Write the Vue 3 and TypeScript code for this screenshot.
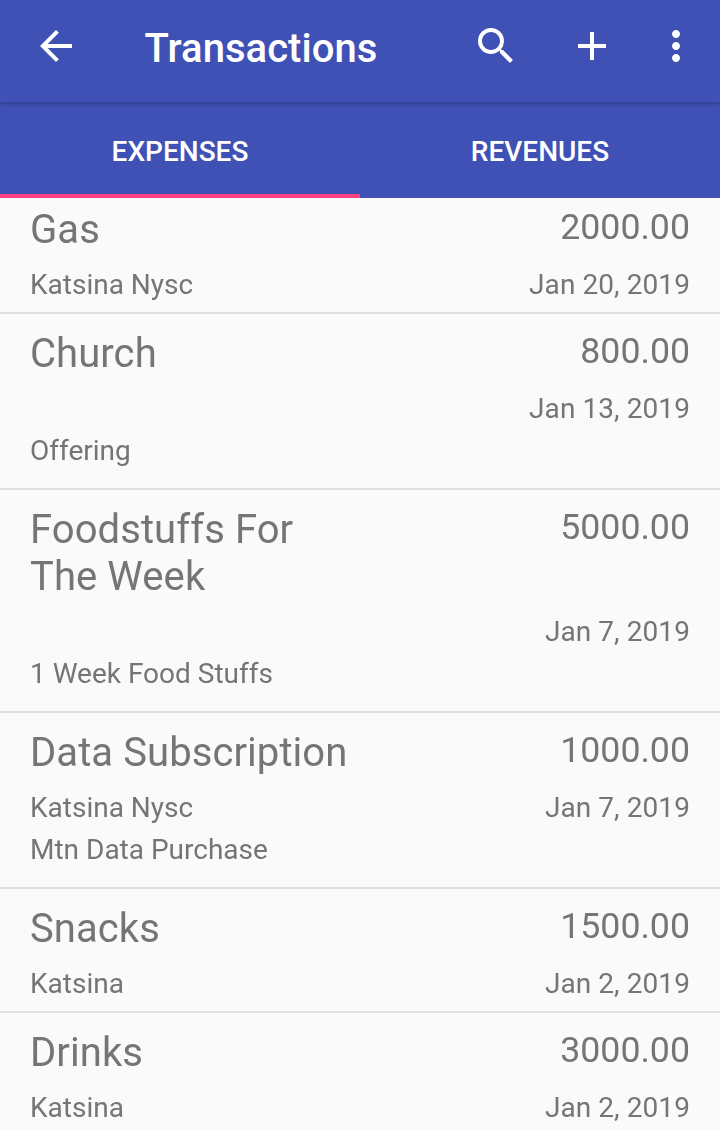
<script setup lang="ts">
interface Txn {
  title: string[];
  amount: string;
  place: string;
  date: string;
  note?: string;
}
const txns: Txn[] = [
  { title: ['Gas'], amount: '2000.00', place: 'Katsina Nysc', date: 'Jan 20, 2019' },
  { title: ['Church'], amount: '800.00', place: '', date: 'Jan 13, 2019', note: 'Offering' },
  { title: ['Foodstuffs For', 'The Week'], amount: '5000.00', place: '', date: 'Jan 7, 2019', note: '1 Week Food Stuffs' },
  { title: ['Data Subscription'], amount: '1000.00', place: 'Katsina Nysc', date: 'Jan 7, 2019', note: 'Mtn Data Purchase' },
  { title: ['Snacks'], amount: '1500.00', place: 'Katsina', date: 'Jan 2, 2019' },
  { title: ['Drinks'], amount: '3000.00', place: 'Katsina', date: 'Jan 2, 2019' },
];
</script>

<template>
  <div class="screen">
    <header class="toolbar">
      <svg class="icon back" viewBox="0 0 24 24"><path d="M20 11H7.83l5.59-5.59L12 4l-8 8 8 8 1.41-1.41L7.83 13H20v-2z" /></svg>
      <h1 class="title">Transactions</h1>
      <svg class="icon" viewBox="0 0 24 24"><path d="M15.5 14h-.79l-.28-.27A6.47 6.47 0 0 0 16 9.5 6.5 6.5 0 1 0 9.5 16c1.61 0 3.09-.59 4.23-1.57l.27.28v.79l5 4.99L20.49 19l-4.99-5zm-6 0C7.01 14 5 11.99 5 9.5S7.01 5 9.5 5 14 7.01 14 9.5 11.99 14 9.5 14z" /></svg>
      <svg class="icon add" viewBox="0 0 24 24"><path d="M19 13h-6v6h-2v-6H5v-2h6V5h2v6h6v2z" /></svg>
      <svg class="icon more" viewBox="0 0 24 24"><path d="M12 8c1.1 0 2-.9 2-2s-.9-2-2-2-2 .9-2 2 .9 2 2 2zm0 2c-1.1 0-2 .9-2 2s.9 2 2 2 2-.9 2-2-.9-2-2-2zm0 6c-1.1 0-2 .9-2 2s.9 2 2 2 2-.9 2-2-.9-2-2-2z" /></svg>
    </header>
    <nav class="tabs">
      <div class="tab active">EXPENSES</div>
      <div class="tab">REVENUES</div>
    </nav>
    <main class="viewport">
      <ul class="list">
        <li v-for="t in txns" :key="t.title.join()" class="row">
          <div class="top">
            <div class="name"><div v-for="line in t.title" :key="line">{{ line }}</div></div>
            <div class="amount">{{ t.amount }}</div>
          </div>
          <div class="meta">
            <span>{{ t.place }}</span>
            <span>{{ t.date }}</span>
          </div>
          <div v-if="t.note" class="note">{{ t.note }}</div>
        </li>
      </ul>
    </main>
  </div>
</template>

<style scoped>
.screen {
  width: 720px;
  height: 1129px;
  display: flex;
  flex-direction: column;
  overflow: hidden;
  background: #fafafa;
  font-family: Roboto, "Liberation Sans", sans-serif;
}
.toolbar {
  position: relative;
  z-index: 1;
  height: 102px;
  box-sizing: border-box;
  flex: none;
  display: flex;
  align-items: center;
  padding: 0 20px 10px 32px;
  background: #3f51b5;
  box-shadow: 0 2px 4px rgba(0, 0, 0, 0.22);
}
.icon {
  width: 48px;
  height: 48px;
  fill: #fff;
  flex: none;
}
.title {
  flex: 1;
  margin: 0 0 0 64.5px;
  padding-top: 5px;
  color: #fff;
  font-size: 40px;
  font-weight: 500;
  line-height: 48px;
  letter-spacing: 0.05px;
}
.add {
  margin-left: 48px;
}
.more {
  margin-left: 36px;
}
.tabs {
  height: 96px;
  flex: none;
  display: flex;
  background: #3f51b5;
}
.tab {
  flex: 1;
  box-sizing: border-box;
  display: flex;
  align-items: center;
  justify-content: center;
  color: #fff;
  font-size: 28px;
  font-weight: 500;
  padding-top: 6px;
  border-bottom: 4px solid transparent;
}
.tab.active {
  border-bottom-color: #ff4081;
}
.viewport {
  flex: 1;
  min-height: 0;
  overflow: hidden;
}
.list {
  list-style: none;
  margin: -8px 0 0;
  padding: 0;
  will-change: transform;
}
.row {
  padding: 16px 30px 8px;
  border-bottom: 2px solid #e0e0e0;
  color: #757575;
}
.top {
  display: flex;
  justify-content: space-between;
  align-items: flex-start;
  margin-bottom: 9px;
}
.name {
  width: 330px;
  font-size: 40px;
  line-height: 47px;
  letter-spacing: 0.08px;
}
.amount {
  font-size: 35.7px;
  line-height: 43px;
}
.meta {
  display: flex;
  justify-content: space-between;
  font-size: 28px;
  line-height: 42px;
  padding-top: 2px;
  margin-bottom: -2px;
}
.meta span:last-child {
  letter-spacing: 0.08px;
}
.note {
  font-size: 28px;
  line-height: 42px;
  padding-top: 2px;
  margin-bottom: 8px;
}
</style>
